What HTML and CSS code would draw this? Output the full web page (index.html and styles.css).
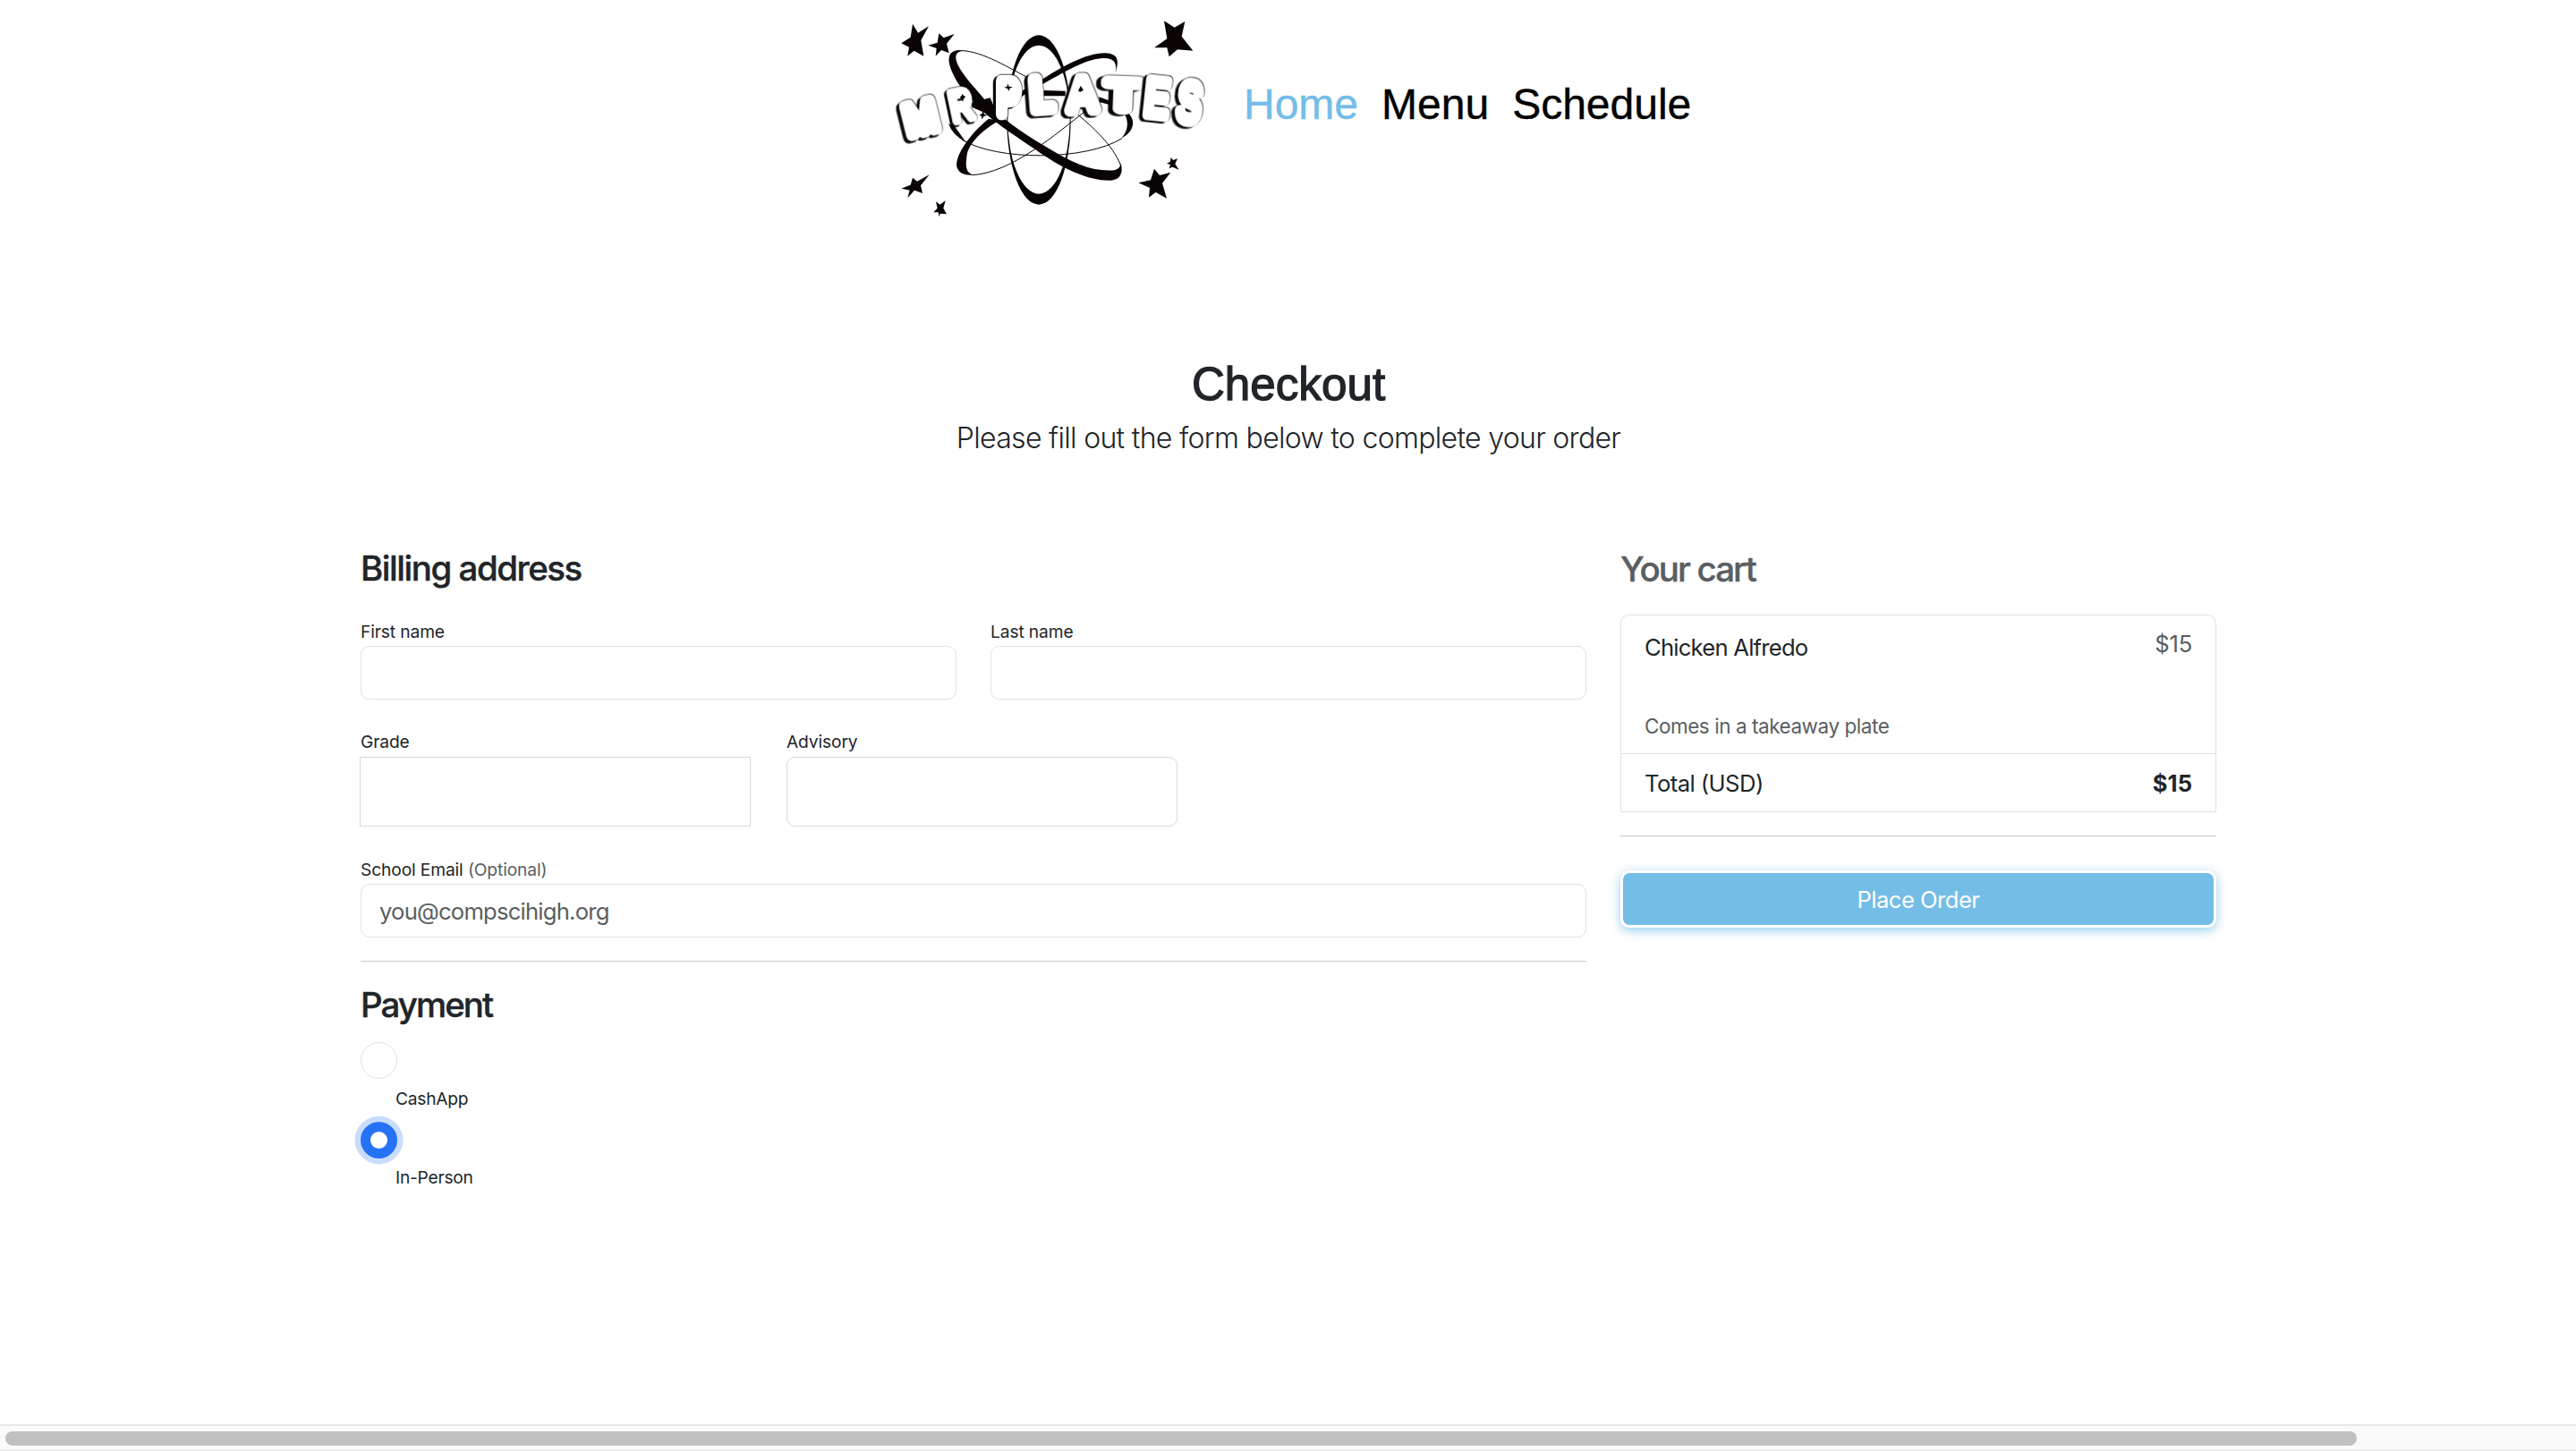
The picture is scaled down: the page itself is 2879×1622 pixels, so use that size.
FILE: index.html
```html
<!DOCTYPE html>
<html lang="en">
<head>
<meta charset="utf-8">
<title>Checkout</title>
<link rel="stylesheet" href="styles.css">
</head>
<body>
<header class="site-header">
  <svg class="logo" viewBox="0 0 1200 780" role="img" aria-label="Mr. Plates">
    <g class="stars">
      <polygon points="120,80 138,110 174,88 148,135 157,188 125,170 103,188 108,158 82,145 113,125"/>
      <polygon points="208,112 224,127 260,114 234,146 242,178 216,168 197,188 200,162 172,152 203,143"/>
      <polygon points="963,70 998,92 1033,72 1022,122 1060,170 1008,166 980,190 973,160 930,160 973,130"/>
      <polygon points="120,596 135,608 176,586 147,622 153,648 126,638 103,664 110,638 82,632 113,620"/>
      <polygon points="198,676 211,686 230,673 223,698 234,718 212,716 208,727 206,712 190,712 203,698"/>
      <polygon points="930,566 948,588 985,578 957,614 972,665 935,645 912,662 915,630 877,613 918,604"/>
      <polygon points="986,527 993,537 1008,532 1000,550 1013,569 991,560 980,565 984,552 972,548 984,542"/>
    </g>
    <g class="orbits">
      <path fill-rule="evenodd" d="M436,402a107,284 0 1 0 214,0a107,284 0 1 0 -214,0Z M439,401a104,249 0 1 0 208,0a104,249 0 1 0 -208,0Z"/>
      <path d="M270,169C225,175 240,225 270,275C330,370 420,425 530,500C620,565 710,607 785,605C830,600 822,560 817,545C820,580 770,572 730,567C660,552 590,505 530,470C460,425 390,375 350,320C310,275 262,220 265,190Q266,172 290,170Z"/>
      <path d="M545,272C620,225 700,178 765,178C812,180 812,205 800,246C808,205 790,190 740,197C690,205 620,245 550,286L440,350L450,325Z"/>
      <path d="M375,398C310,450 255,530 270,565Q280,590 325,587C295,580 298,550 302,520C308,480 360,430 410,405Z"/>
      <path d="M312,345L380,328L410,400L320,360Z M560,303L632,305L632,322L560,322Z M745,325L800,345L800,356L745,342Z"/>
      <path d="M838,375C870,400 865,440 820,464C842,440 845,410 832,385Z M240,415Q255,455 298,476Q280,450 262,425Z"/>
    </g>
    <g class="orbit-lines">
      <path d="M270,170C340,165 430,220 505,260"/>
      <path d="M675,385C740,440 800,500 819,560"/>
      <path d="M320,587C450,580 600,450 705,368"/>
      <path d="M822,464C700,540 400,540 285,468"/>
    </g>
    <g class="bubble">
      <text transform="translate(106,456) rotate(-14) scale(.82,.9)">M</text>
      <text class="slim" transform="translate(256,408) rotate(-12) scale(.65,.88)">R</text>
      <text transform="translate(405,382) scale(.68,.98)">P</text>
      <text transform="translate(520,371) rotate(-4) scale(.84,.92)">L</text>
      <text transform="translate(646,371) rotate(-2) scale(.84,.93)">A</text>
      <text transform="translate(769,364) rotate(2) scale(1.12,.84)">T</text>
      <text class="slim" transform="translate(893,384) rotate(6) scale(.76,1.06)">E</text>
      <text class="slim" transform="translate(1002,401) rotate(7) scale(.74,1.13)">S</text>
    </g>
    <path d="M356,372L360,383L370,386L359,390L352,400L351,389L343,386L352,382Z"/>
    <path d="M438,280L443,290L456,292L445,296L444,306L438,297L427,293L437,290Z"/>
    <path d="M287,314L291,321L298,325L291,331L288,341L284,332L278,326L284,322Z M683,288L693,302L682,308L675,305Z"/>
  </svg>
  <nav class="nav">
    <a class="nav-link active">Home</a>
    <a class="nav-link">Menu</a>
    <a class="nav-link">Schedule</a>
  </nav>
</header>

<main class="container">
  <div class="intro">
    <h2 class="title">Checkout</h2>
    <p class="lead">Please fill out the form below to complete your order</p>
  </div>
  <div class="columns">
    <form class="billing">
      <h4 class="heading">Billing address</h4>
      <div class="row">
        <label class="field">First name<input class="input" type="text"></label>
        <label class="field">Last name<input class="input" type="text"></label>
      </div>
      <div class="row thirds">
        <label class="field"><span class="inset">Grade</span><input class="input tall square" type="text"></label>
        <label class="field">Advisory<input class="input tall" type="text"></label>
      </div>
      <div class="row">
        <label class="field"><span>School Email <span class="muted">(Optional)</span></span><input class="input" type="email" placeholder="you@compscihigh.org"></label>
      </div>
      <hr class="rule">
      <h4 class="heading payment">Payment</h4>
      <div class="option"><i class="radio"></i><div class="option-label">CashApp</div></div>
      <div class="option"><i class="radio checked"></i><div class="option-label">In-Person</div></div>
    </form>
    <aside class="cart">
      <h4 class="heading cart-title muted">Your cart</h4>
      <ul class="list">
        <li class="item product">
          <div>
            <h6 class="name">Chicken Alfredo</h6>
            <small class="note muted">Comes in a takeaway plate</small>
          </div>
          <span class="price muted">$15</span>
        </li>
        <li class="item total"><span class="total-label">Total (USD)</span><strong>$15</strong></li>
      </ul>
      <hr class="rule">
      <button class="button" type="button">Place Order</button>
    </aside>
  </div>
</main>
<div class="scrollbar"><div class="thumb"></div></div>
</body>
</html>
```
FILE: styles.css
```css
* { box-sizing: border-box; }
html, body { height: 100%; }
body {
  margin: 0;
  display: flex;
  flex-direction: column;
  overflow: hidden;
  background: #fff;
  color: #212529;
  font: 400 25.6px/30px Inter, "Liberation Sans", sans-serif;
}
h2, h4, h6, p, ul { margin: 0; padding: 0; }
.muted { color: #5a5e62; }

.site-header { display: flex; height: 260px; padding-left: 980px; }
.logo { width: 400px; height: 260px; flex: none; }
.orbit-lines { fill: none; stroke: #0a0405; stroke-width: 3; }
.orbits, .stars { fill: #0a0405; }
.bubble {
  font: 400 160px "Liberation Sans", sans-serif;
  fill: #fff;
  stroke: #fff;
  stroke-width: 44;
  stroke-linejoin: round;
  stroke-linecap: round;
}
.bubble .slim { stroke-width: 33; }
.bubble text { filter: drop-shadow(2px -1.5px 0 #0a0405) drop-shadow(-14px 6px 0 #0a0405); }
.nav {
  display: flex;
  gap: 26px;
  padding: 89px 0 0 10px;
  font: 400 48px/56px "Liberation Sans", Arial, sans-serif;
}
.nav-link { color: #000; -webkit-text-stroke: .4px currentColor; }
.nav-link.active { color: #74bde7; }

.container { width: 2074px; margin-left: 403px; flex: 1; }
.intro { padding-top: 139px; text-align: center; }
.title {
  font: 400 51.2px/62px "Liberation Sans", Arial, sans-serif;
  -webkit-text-stroke: 1.3px #212529;
}
.lead {
  margin-top: 5px;
  font-size: 32px;
  line-height: 48px;
  font-weight: 300;
  letter-spacing: -.68px;
}
.columns { display: grid; grid-template-columns: 1370px 666px; gap: 38px; margin-top: 98px; }
.heading { font-size: 38.4px; line-height: 46px; font-weight: 500; letter-spacing: -1.43px; -webkit-text-stroke: .4px currentColor; }

.row { display: flex; gap: 38px; margin-top: 34px; }
.field {
  display: flex;
  flex-direction: column;
  gap: 2px;
  flex: 1;
  font-size: 19.2px;
  line-height: 28px;
  letter-spacing: -.12px;
}
.input {
  width: 100%;
  height: 60px;
  padding: 0 20px;
  border: 1px solid #dee2e6;
  border-radius: 9.6px;
  background: #fff;
  outline: 0;
  color: #212529;
  font: 400 25.6px/30px Inter, sans-serif;
  letter-spacing: -.77px;
}
.input::placeholder { color: #5a5e62; opacity: 1; }
.thirds { gap: 40px; margin: 33px 0 0 -1px; }
.thirds .field { flex: none; width: 437px; gap: 3px; }
.inset { padding-left: 1px; }
.tall { height: 78px; border-color: #d9d9d9; }
.square { border-radius: 0; }
.rule { margin: 26px 0 0; border: 0; height: 1px; background: #c8c8c8; }
.payment { margin: 25px 0 19px; letter-spacing: -1.92px; }
.option { height: 77px; margin-bottom: 12px; }
.radio {
  display: block;
  width: 41px;
  height: 41px;
  border: 1px solid #dee2e6;
  border-radius: 50%;
}
.radio.checked { border: 11px solid #2572f5; box-shadow: 0 0 0 6.4px #c9dcfd; }
.option-label { margin: 8px 0 0 39px; font-size: 19.2px; line-height: 28px; letter-spacing: -.25px; }
.checked + .option-label { margin-top: 7px; }

.cart { padding-top: 1px; }
.cart-title { letter-spacing: -1.85px; }
.list { margin-top: 28px; list-style: none; border: 1px solid #dee2e6; border-radius: 9.6px 9.6px 0 0; }
.item { display: flex; justify-content: space-between; padding: 0 26px; }
.product { height: 155px; padding-top: 16px; border-bottom: 1px solid #dee2e6; }
.price { padding-top: 1px; letter-spacing: -.2px; }
.name { margin-top: 5px; font-size: 25.6px; font-weight: 400; letter-spacing: -.76px; }
.note { display: block; margin-top: 56px; font-size: 22.4px; line-height: 34px; letter-spacing: -.4px; }
.total { height: 64px; padding-top: 18px; }
.total-label { letter-spacing: -.55px; }
.button {
  display: block;
  width: 666px;
  height: 64px;
  margin-top: 38px;
  padding: 2px 0 0;
  border: 3px solid #fff;
  border-radius: 9.6px;
  background: #74bde7;
  background-clip: padding-box;
  box-shadow: 0 3px 12px rgba(116, 189, 231, .75);
  color: #fff;
  font: 400 25.6px/30px Inter, sans-serif;
  letter-spacing: -.52px;
}

.scrollbar {
  height: 30px;
  flex: none;
  padding: 6px 0 0 6px;
  border-top: 2px solid #e8e8e8;
  border-bottom: 2px solid #ececec;
  background: #fafafa;
}
.thumb { width: 2628px; height: 16px; border-radius: 8px; background: #c1c1c1; }
```
